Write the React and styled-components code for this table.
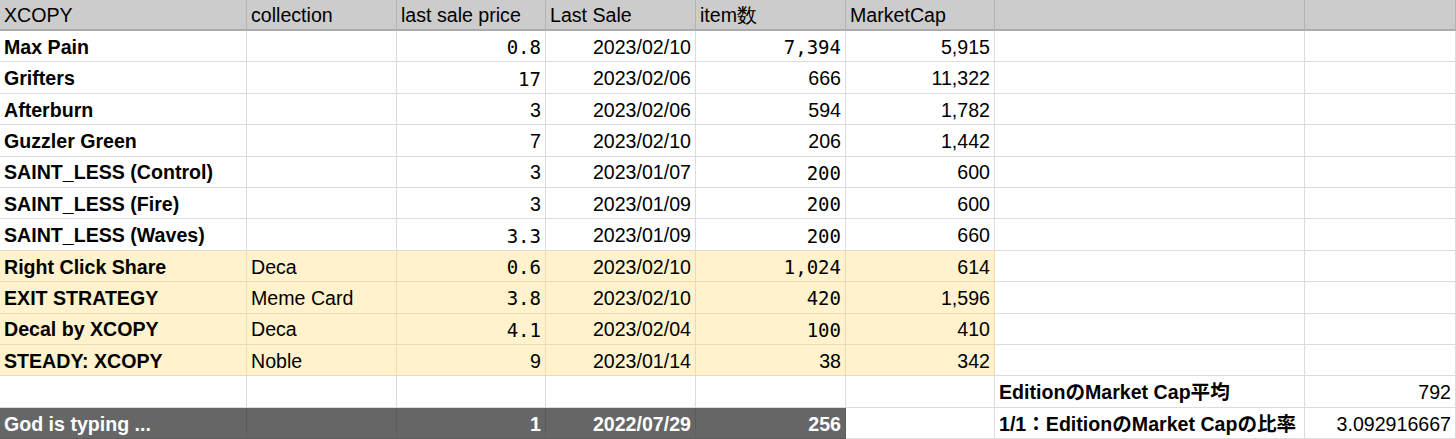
import React from "react";
import styled, { createGlobalStyle, css } from "styled-components";

const Global = createGlobalStyle`
  html, body { margin: 0; padding: 0; background: #ffffff; }
  body { font-family: "Liberation Sans", Arial, sans-serif; overflow: hidden; }
`;

const Sheet = styled.div`
  display: grid;
  grid-template-columns: 247px 150px 149px 150px 150px 149px 310px 151px;
  grid-template-rows: 31px repeat(13, 31.4px);
  width: 1456px;
  height: 439px;
  overflow: hidden;
  background: #ffffff;
`;

const HeaderCell = styled.div`
  box-sizing: border-box;
  display: flex;
  align-items: center;
  padding: 3px 4px 0;
  background: #cccccc;
  border-right: 1px solid #b4b4b4;
  border-bottom: 2px solid #acacac;
  color: #000000;
  font-family: "Liberation Sans", Arial, sans-serif;
  font-size: 19.6px;
  line-height: 1;
  white-space: nowrap;
`;

const tones = {
  plain: css`
    background: #ffffff;
    color: #000000;
    border-right: 1px solid #dcdcdc;
    border-bottom: 1px solid #dcdcdc;
  `,
  yellow: css`
    background: #fff2cc;
    color: #000000;
    border-right: 1px solid #eadcb2;
    border-bottom: 1px solid #eadcb2;
  `,
  dark: css`
    background: #666666;
    color: #ffffff;
    border-right: 1px solid #5c5c5c;
    border-bottom: 1px solid #5c5c5c;
  `,
};

const Cell = styled.div`
  box-sizing: border-box;
  display: flex;
  align-items: center;
  justify-content: ${(p) => (p.$align === "right" ? "flex-end" : "flex-start")};
  padding: 3px 4px 0;
  font-family: ${(p) =>
    p.$mono
      ? `"DejaVu Sans Mono", "Liberation Mono", monospace`
      : `"Liberation Sans", Arial, "Noto Sans CJK JP", sans-serif`};
  font-size: ${(p) => (p.$mono ? "19px" : "19.6px")};
  font-weight: ${(p) => (p.$bold ? 700 : 400)};
  line-height: 1;
  white-space: nowrap;
  overflow: visible;
  ${(p) => tones[p.$tone || "plain"]}
`;

const headers = ["XCOPY", "collection", "last sale price", "Last Sale", "item数", "MarketCap", "", ""];

// [name, collection, price, priceMono, date, items, itemsMono, cap, tone]
const rows = [
  ["Max Pain", "", "0.8", true, "2023/02/10", "7,394", true, "5,915", "plain"],
  ["Grifters", "", "17", true, "2023/02/06", "666", false, "11,322", "plain"],
  ["Afterburn", "", "3", false, "2023/02/06", "594", false, "1,782", "plain"],
  ["Guzzler Green", "", "7", false, "2023/02/10", "206", false, "1,442", "plain"],
  ["SAINT_LESS (Control)", "", "3", false, "2023/01/07", "200", true, "600", "plain"],
  ["SAINT_LESS (Fire)", "", "3", false, "2023/01/09", "200", true, "600", "plain"],
  ["SAINT_LESS (Waves)", "", "3.3", true, "2023/01/09", "200", true, "660", "plain"],
  ["Right Click Share", "Deca", "0.6", true, "2023/02/10", "1,024", true, "614", "yellow"],
  ["EXIT STRATEGY", "Meme Card", "3.8", true, "2023/02/10", "420", true, "1,596", "yellow"],
  ["Decal by XCOPY", "Deca", "4.1", true, "2023/02/04", "100", true, "410", "yellow"],
  ["STEADY: XCOPY", "Noble", "9", false, "2023/01/14", "38", false, "342", "yellow"],
];

export default function App() {
  return (
    <>
      <Global />
      <Sheet>
        {headers.map((h, i) => (
          <HeaderCell key={"h" + i}>{h}</HeaderCell>
        ))}

        {rows.map(([name, coll, price, pm, date, items, im, cap, tone]) => (
          <React.Fragment key={name}>
            <Cell $bold $tone={tone}>{name}</Cell>
            <Cell $tone={tone}>{coll}</Cell>
            <Cell $align="right" $mono={pm} $tone={tone}>{price}</Cell>
            <Cell $align="right" $tone={tone}>{date}</Cell>
            <Cell $align="right" $mono={im} $tone={tone}>{items}</Cell>
            <Cell $align="right" $tone={tone}>{cap}</Cell>
            <Cell />
            <Cell />
          </React.Fragment>
        ))}

        <Cell />
        <Cell />
        <Cell />
        <Cell />
        <Cell />
        <Cell />
        <Cell $bold>EditionのMarket Cap平均</Cell>
        <Cell $align="right">792</Cell>

        <Cell $bold $tone="dark">God is typing ...</Cell>
        <Cell $tone="dark" />
        <Cell $bold $align="right" $tone="dark">1</Cell>
        <Cell $bold $align="right" $tone="dark">2022/07/29</Cell>
        <Cell $bold $align="right" $tone="dark">256</Cell>
        <Cell />
        <Cell $bold>1/1：EditionのMarket Capの比率</Cell>
        <Cell $align="right">3.092916667</Cell>
      </Sheet>
    </>
  );
}
